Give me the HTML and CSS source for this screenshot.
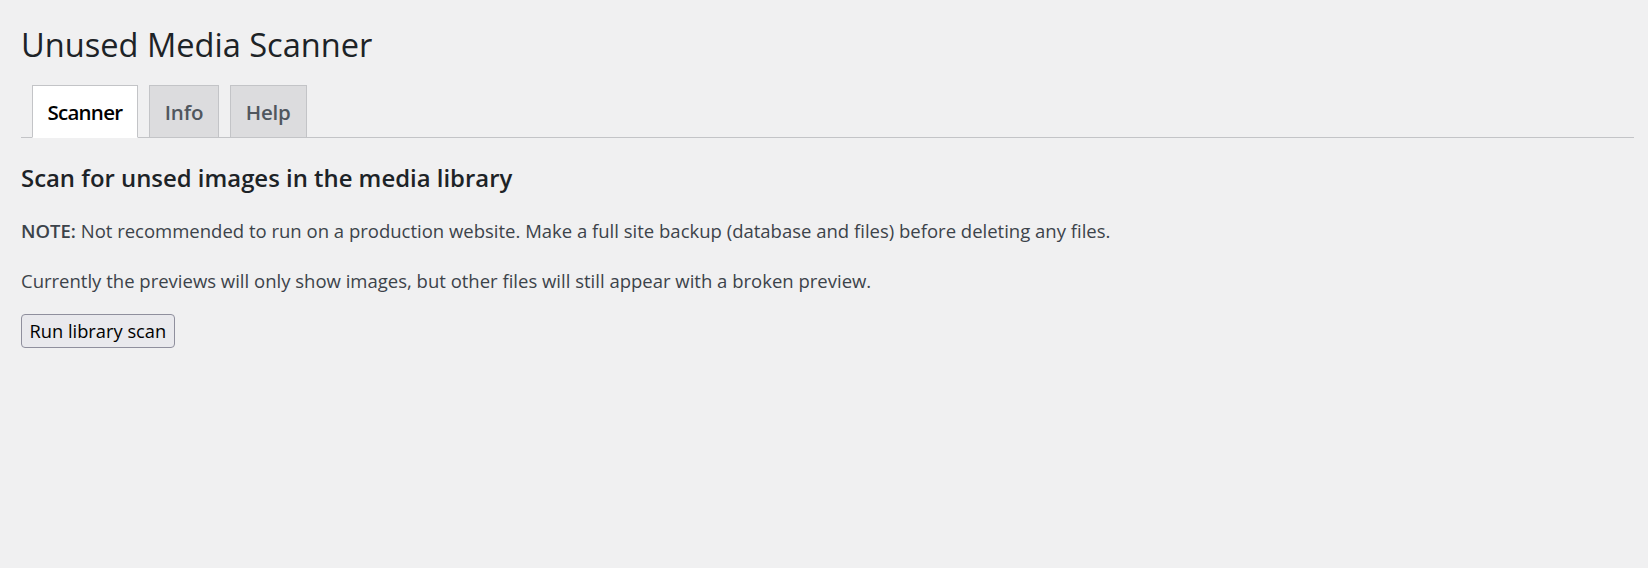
FILE: index.html
```html
<!DOCTYPE html>
<html lang="en">
<head>
<meta charset="utf-8">
<title>Unused Media Scanner</title>
<link rel="stylesheet" href="styles.css">
</head>
<body>
<div class="wrap">
  <h1 class="page-title">Unused Media Scanner</h1>
  <nav class="nav-tab-wrapper">
    <a class="nav-tab nav-tab-active" href="#">Scanner</a>
    <a class="nav-tab" href="#">Info</a>
    <a class="nav-tab" href="#">Help</a>
  </nav>
  <h2 class="section-title">Scan for unsed images in the media library</h2>
  <p class="text text-first"><strong>NOTE:</strong> Not recommended to run on a production website. Make a full site backup (database and files) before deleting any files.</p>
  <p class="text">Currently the previews will only show images, but other files will still appear with a broken preview.</p>
  <div class="actions">
    <button class="button" type="button">Run library scan</button>
  </div>
</div>
</body>
</html>
```
FILE: styles.css
```css
html, body {
  margin: 0;
  padding: 0;
  background: #f0f0f1;
}
body {
  font-family: "Open Sans", "Noto Sans", sans-serif;
  color: #3c434a;
}
.wrap {
  padding: 0 14px 0 21px;
}
.page-title {
  margin: 0;
  padding-top: 21.5px;
  font-size: 32.6px;
  line-height: 45px;
  font-weight: 400;
  color: #1d2327;
}
.nav-tab-wrapper {
  display: flex;
  align-items: flex-end;
  height: 52px;
  margin-top: 18.5px;
  border-bottom: 1px solid #c3c4c7;
}
.nav-tab {
  display: block;
  margin-left: 10.5px;
  margin-bottom: -1px;
  padding: 8px 15px 7px;
  font-size: 20.5px;
  letter-spacing: -0.2px;
  line-height: 36px;
  font-weight: 600;
  color: #50575e;
  background: #dcdcde;
  border: 1px solid #c3c4c7;
  text-decoration: none;
}
.nav-tab-active {
  background: #fff;
  color: #000;
  border-bottom-color: #fff;
  letter-spacing: -0.75px;
}
.section-title {
  margin: 23px 0 0;
  font-size: 23.9px;
  line-height: 34px;
  font-weight: 600;
  color: #1d2327;
}
.text {
  margin: 20.2px 0 0;
  font-size: 18.5px;
  line-height: 29.25px;
}
.text-first {
  margin-top: 21.1px;
}
.text strong {
  font-weight: 600;
}
.actions {
  margin-top: 19.2px;
}
.button {
  display: block;
  box-sizing: border-box;
  height: 34px;
  padding: 0 7.5px;
  font-family: "Open Sans", "Noto Sans", sans-serif;
  font-size: 18.3px;
  color: #000;
  background: #e9e9ed;
  border: 1px solid #8f8f9d;
  border-radius: 4px;
}
```
